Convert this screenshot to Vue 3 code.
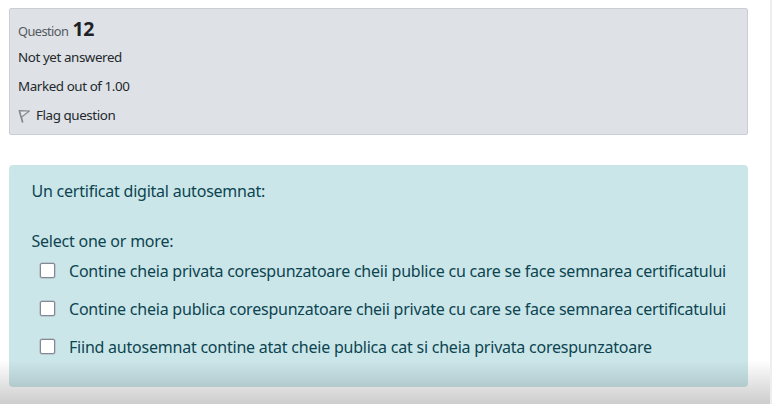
<script setup>
const options = [
  { id: 'a', text: 'Contine cheia privata corespunzatoare cheii publice cu care se face semnarea certificatului' },
  { id: 'b', text: 'Contine cheia publica corespunzatoare cheii private cu care se face semnarea certificatului' },
  { id: 'c', text: 'Fiind autosemnat contine atat cheie publica cat si cheia privata corespunzatoare' },
]
</script>

<template>
  <main class="page">
    <section class="info">
      <h3 class="title"><span class="label">Question</span><span class="number">12</span></h3>
      <div class="state">Not yet answered</div>
      <div class="grade">Marked out of 1.00</div>
      <div class="flag">
        <svg class="flag-icon" width="12" height="14" viewBox="0 0 12 14">
          <path d="M1.3 1.3 4.7 13.5" fill="none" stroke="#808386" stroke-width="1.6" />
          <path d="M1.5 1.6 11.4 2 3.4 8.2Z" fill="#e6e8ea" stroke="#85888b" stroke-width="1.2" />
        </svg>
        <span class="flag-text">Flag question</span>
      </div>
    </section>
    <section class="formulation">
      <p class="question">Un certificat digital autosemnat:</p>
      <p class="prompt">Select one or more:</p>
      <div class="answers">
        <label v-for="o in options" :key="o.id" class="option">
          <input type="checkbox" class="box" />
          <span class="text">{{ o.text }}</span>
        </label>
      </div>
    </section>
    <div class="shade"></div>
  </main>
</template>

<style>
body { background: #fff; overflow: hidden; }
</style>

<style scoped>
.page {
  position: relative;
  box-sizing: border-box;
  width: 772px;
  height: 404px;
  padding: 8px 22px 0 9px;
  border-right: 2px solid #eeeeef;
  font-family: "Noto Sans", "Open Sans", sans-serif;
  overflow: hidden;
}
.info {
  box-sizing: border-box;
  height: 127px;
  padding: 6px 8px 0;
  border: 1px solid #cbced6;
  border-radius: 2px;
  background: #dee2e6;
  color: #24282d;
  font-size: 13.4px;
}
.title { display: flex; align-items: baseline; height: 28px; margin: 0; line-height: 27px; font-weight: 400; }
.label { width: 54.5px; font-size: 12.8px; letter-spacing: -0.55px; color: #555a60; white-space: nowrap; }
.number { font-size: 19.5px; font-weight: 700; color: #1d2125; letter-spacing: -0.4px; }
.state, .grade, .flag { height: 29px; line-height: 29px; white-space: nowrap; letter-spacing: -0.42px; }
.flag { display: flex; align-items: center; gap: 6px; }
.flag-icon { flex: none; }
.formulation {
  box-sizing: border-box;
  height: 222px;
  margin-top: 30px;
  padding: 14px 22px 0 22.5px;
  border-radius: 4px;
  background: #cbe6e9;
  color: #0c4450;
  font-size: 16px;
  letter-spacing: -0.225px;
}
.question, .prompt { margin: 0; height: 25px; line-height: 25px; white-space: nowrap; }
.prompt { margin-top: 25px; }
.answers { margin-top: -3px; padding-left: 8.5px; }
.option { display: flex; align-items: center; height: 38.3px; white-space: nowrap; }
.box {
  appearance: none;
  flex: none;
  box-sizing: border-box;
  width: 15px;
  height: 15px;
  margin: 0 14px 0 0;
  border: 1.5px solid #858894;
  box-shadow: 0 0 0 0.5px #a3abb5;
  border-radius: 2px;
  background: #fff;
}
.text { padding-top: 1px; }
.shade {
  position: absolute;
  left: 0;
  right: -2px;
  bottom: 0;
  height: 44px;
  background: linear-gradient(rgba(0, 0, 0, 0), rgba(0, 0, 0, 0.2));
  pointer-events: none;
}
</style>
